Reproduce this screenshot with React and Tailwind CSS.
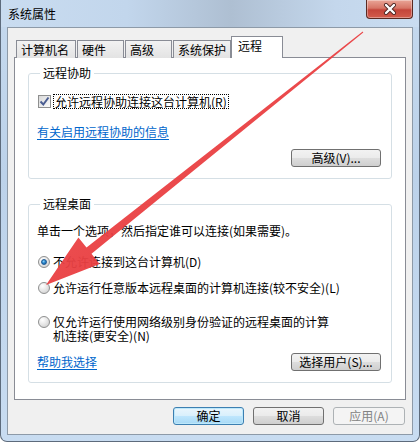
import React from 'react';

const font = "font-['Noto_Sans_CJK_SC','Noto_Sans',sans-serif]";

const Btn = ({ children, className = '', variant = 'normal' }) => {
    const styles = {
        normal: 'border-[#707070] bg-[linear-gradient(#f2f2f2_0%,#ebebeb_48%,#dddddd_52%,#cfcfcf_100%)] text-black',
        default: 'border-[#3c7fb1] bg-[linear-gradient(#eaf6fd_0%,#d9f0fc_48%,#bee6fd_52%,#a7d9f5_100%)] text-black shadow-[inset_0_0_0_1px_#bde8fb]',
        disabled: 'border-[#adb2b5] bg-[#f4f4f4] text-[#838383]',
    };
    return (
        <div className={`flex items-center justify-center h-[18px] rounded-[3px] border text-[12px] leading-none ${styles[variant]} ${className}`}>
            {children}
        </div>
    );
};

const Radio = ({ checked }) => (
    <span className="mt-[2px] w-[12px] h-[12px] shrink-0 rounded-full border border-[#8e8f8f] bg-[radial-gradient(circle_at_35%_30%,#ffffff_0%,#e8e8e8_45%,#c8c8c8_100%)] flex items-center justify-center">
        {checked && (
            <span className="w-[6px] h-[6px] rounded-full bg-[radial-gradient(circle_at_40%_35%,#8fd0f5_0%,#2a8bd0_45%,#1c4f8c_100%)] border border-[#1e5a94]" />
        )}
    </span>
);

const Group = ({ title, children, className = '' }) => (
    <fieldset className={`border border-[#d5dfe5] rounded-[3px] pl-[8px] pr-[10px] ${className}`}>
        <legend className="ml-[3px] px-[3px] text-[12px] leading-[14px] text-black">{title}</legend>
        {children}
    </fieldset>
);

// red annotation arrow drawn over the dialog
const Arrow = () => (
    <svg className="absolute inset-0 pointer-events-none" width="420" height="442" viewBox="0 0 420 442">
        <defs>
            <linearGradient id="ar" x1="0" y1="0" x2="1" y2="1">
                <stop offset="0" stopColor="#f05a5a" />
                <stop offset="1" stopColor="#e3262b" />
            </linearGradient>
        </defs>
        <polygon
            points="362.3,32.4 90.5,253.8 98.6,264.0 45,285 77.4,237.4 85.5,247.6 361.7,31.6"
            fill="url(#ar)"
            opacity="0.95"
        />
    </svg>
);

const App = () => {
    const tabs = [
        { label: '计算机名', w: 'w-[60px]' },
        { label: '硬件', w: 'w-[47px]' },
        { label: '高级', w: 'w-[47px]' },
        { label: '系统保护', w: 'w-[58px]' },
    ];

    return (
        <div className={`relative w-[420px] h-[442px] overflow-hidden rounded-b-[7px] border-x border-b border-[#5d6b7c] bg-[linear-gradient(#c5d9ee_0%,#bcd2ea_40%,#c8dcf1_100%)] ${font}`}>
            {/* title bar */}
            <div className="h-[27px] flex items-center pl-[7px] text-[12px] text-black bg-[linear-gradient(90deg,#c9dcf0_0%,#c2d6ec_30%,#aebfd2_55%,#c4d7ec_80%,#c9dcf0_100%)]">
                系统属性
            </div>
            <div className="absolute top-0 right-[6px] w-[47px] h-[19px] rounded-b-[4px] border border-t-0 border-[#5a2a22] bg-[linear-gradient(#e9a597_0%,#d77566_45%,#c4453a_55%,#d25c4c_100%)] shadow-[inset_0_0_0_1px_rgba(255,255,255,0.35)] flex items-center justify-center">
                <svg width="14" height="12" viewBox="0 0 14 12">
                    <path d="M3 2 L11 10 M11 2 L3 10" stroke="#4a2320" strokeWidth="4" strokeLinecap="round" />
                    <path d="M3 2 L11 10 M11 2 L3 10" stroke="#ffffff" strokeWidth="2.4" strokeLinecap="round" />
                </svg>
            </div>

            {/* client */}
            <div className="mx-[6px] h-[408px] border border-[#8d9aa8] bg-[#f0f0f0] px-[6px] pt-[7px]">
                {/* tabs */}
                <div className="flex items-end h-[22px] pl-[2px] text-[12px] text-black">
                    {tabs.map((t) => (
                        <div key={t.label} className={`${t.w} h-[18px] -mb-[1px] mr-[1px] border border-b-0 border-[#898c95] bg-[linear-gradient(#f2f2f2,#e3e3e3)] flex items-center pl-[4px] leading-none`}>
                            {t.label}
                        </div>
                    ))}
                    <div className="relative z-10 w-[52px] h-[22px] -mb-[1px] -ml-[1px] border border-b-0 border-[#898c95] bg-white flex items-start pt-[3px] pl-[6px] leading-none">
                        远程
                    </div>
                </div>

                {/* panel */}
                <div className="h-[343px] border border-[#898c95] bg-white px-[13px] pt-[8px] text-[12px] text-black">
                    <Group title="远程协助" className="h-[113px]">
                        <div className="mt-[13px] flex items-center h-[16px] leading-[16px]">
                            <span className="w-[13px] h-[13px] ml-[1px] shrink-0 border border-[#8e8f8f] bg-[linear-gradient(135deg,#d9d9d9,#fbfbfb)] flex items-center justify-center">
                                <svg width="11" height="11" viewBox="0 0 11 11">
                                    <path d="M1.5 5.5 L4.3 8.5 L9.5 1.5" fill="none" stroke="#4b5e92" strokeWidth="2" />
                                </svg>
                            </span>
                            <span className="ml-[2px] px-[1px] border border-dotted border-black leading-[13px]">允许远程协助连接这台计算机(R)</span>
                        </div>
                        <div className="mt-[15px] h-[16px] leading-[16px] text-[#0066cc] underline underline-offset-2">有关启用远程协助的信息</div>
                        <div className="mt-[9px] flex justify-end">
                            <Btn className="w-[90px]">高级(V)...</Btn>
                        </div>
                    </Group>

                    <Group title="远程桌面" className="mt-[18px] h-[186px]">
                        <div className="mt-[12px] h-[16px] leading-[16px]">单击一个选项，然后指定谁可以连接(如果需要)。</div>
                        <div className="mt-[15px] flex items-start gap-[3px] h-[16px] leading-[16px] pl-[1px]">
                            <Radio checked />
                            <span>不允许连接到这台计算机(D)</span>
                        </div>
                        <div className="mt-[10px] flex items-start gap-[3px] h-[16px] leading-[16px] pl-[1px]">
                            <Radio />
                            <span>允许运行任意版本远程桌面的计算机连接(较不安全)(L)</span>
                        </div>
                        <div className="mt-[19px] flex items-start gap-[3px] pl-[1px] leading-[14px]">
                            <span className="-mt-[1px]"><Radio /></span>
                            <span>仅允许运行使用网络级别身份验证的远程桌面的计算<br />机连接(更安全)(N)</span>
                        </div>
                        <div className="mt-[10px] flex items-center justify-between h-[18px]">
                            <span className="text-[#0066cc] underline underline-offset-2 leading-[16px]">帮助我选择</span>
                            <Btn className="w-[90px]">选择用户(S)...</Btn>
                        </div>
                    </Group>
                </div>

                {/* bottom buttons */}
                <div className="mt-[7px] flex justify-end gap-[9px] pr-[1px]">
                    <Btn variant="default" className="w-[71px]">确定</Btn>
                    <Btn className="w-[71px]">取消</Btn>
                    <Btn variant="disabled" className="w-[72px]">应用(A)</Btn>
                </div>
            </div>

            <Arrow />
        </div>
    );
};

export default App;
